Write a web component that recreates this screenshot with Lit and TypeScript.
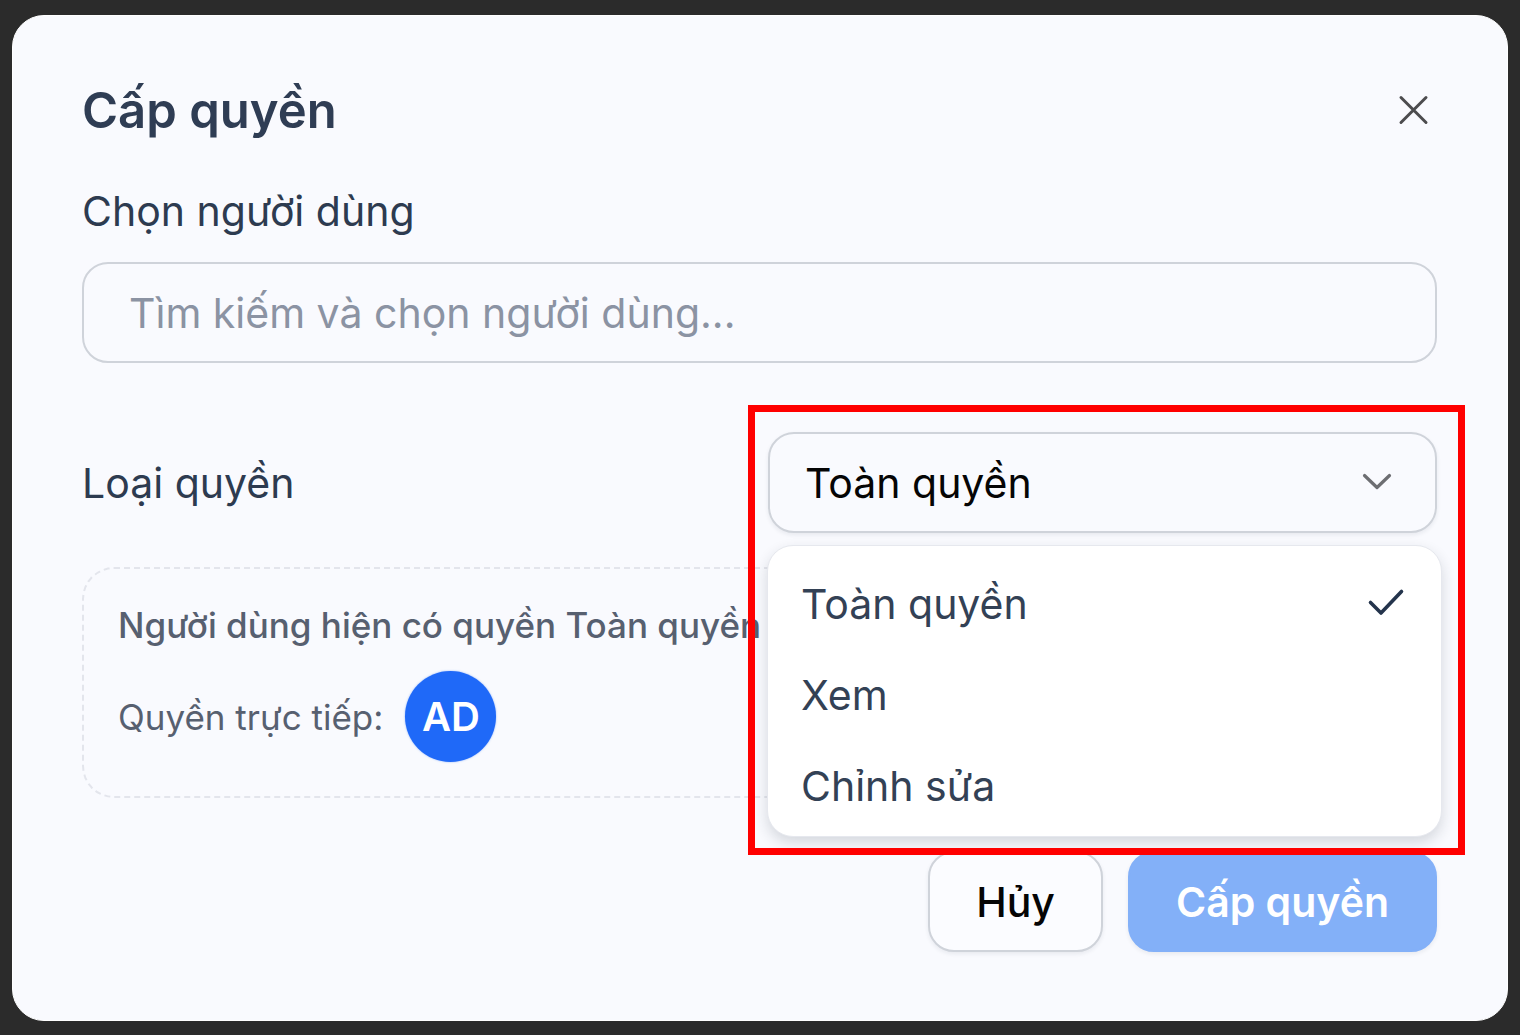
import { LitElement, html, css, svg } from "lit";
import { customElement, state } from "lit/decorators.js";

const OPTIONS = ["Toàn quyền", "Xem", "Chỉnh sửa"];

const closeIcon = svg`<svg class="icon" width="32" height="32" viewBox="0 0 32 32" aria-hidden="true">
  <path d="M4 2.5 29 27.5M29 2.5 4 27.5" stroke="#4c4c4e" stroke-width="3" />
</svg>`;

const chevronIcon = svg`<svg class="chevron" width="32" height="20" viewBox="0 0 32 20" aria-hidden="true">
  <path d="M3.5 3.5 16 15.5 28.5 3.5" stroke="#6d6e72" stroke-width="3.2" />
</svg>`;

const checkIcon = svg`<svg class="icon" width="38" height="34" viewBox="0 0 38 34" aria-hidden="true">
  <path d="M3.5 15.5 14 26 34.5 4.5" stroke="#24344c" stroke-width="3.6" />
</svg>`;

@customElement("app-root")
export class AppRoot extends LitElement {
  @state() private selected = OPTIONS[0];

  static styles = css`
    :host {
      display: flex;
      flex-direction: column;
      box-sizing: border-box;
      min-height: 100vh;
      padding: 15px 12px 14px;
      background: #2b2b2b;
      font-family: Inter, "Noto Sans", sans-serif;
      font-optical-sizing: none;
      color: #2d3b50;
    }
    * {
      box-sizing: border-box;
    }
    button,
    input,
    select {
      font: inherit;
      color: inherit;
      margin: 0;
    }
    svg {
      fill: none;
      stroke-linecap: round;
      stroke-linejoin: round;
    }
    .icon {
      display: block;
      flex: none;
    }
    .dialog {
      flex: 1;
      display: flex;
      flex-direction: column;
      padding: 64px 70px 68px 69px;
      border: 1px solid #ffffff;
      border-radius: 32px;
      background: #f9fafe;
      font-size: 41px;
      line-height: 50px;
    }
    .header {
      display: flex;
      align-items: center;
      justify-content: space-between;
      margin-bottom: 45px;
    }
    .title {
      margin: 0;
      font-size: 49px;
      line-height: 61px;
      font-weight: 600;
      color: #2f3d54;
    }
    .close {
      padding: 8px;
      border: 0;
      background: none;
    }
    .field {
      display: flex;
      flex-direction: column;
      gap: 26px;
      margin-bottom: 69px;
    }
    .control {
      width: 100%;
      height: 101px;
      border: 2px solid #cfd3da;
      border-radius: 26px;
      background: transparent;
    }
    .search {
      padding: 0 45px;
    }
    .search::placeholder {
      color: #8b93a3;
      opacity: 1;
    }
    .row {
      display: grid;
      grid-template-columns: 1fr 1fr;
      align-items: center;
      gap: 17px;
      margin-bottom: 34px;
    }
    .picker {
      position: relative;
      z-index: 1;
    }
    .select {
      display: block;
      appearance: none;
      padding: 0 35px;
      color: #050505;
      box-shadow: 0 2px 4px rgba(30, 41, 59, 0.08);
    }
    .chevron {
      position: absolute;
      top: 40px;
      right: 44px;
      pointer-events: none;
    }
    .menu {
      position: absolute;
      top: 113px;
      left: -1px;
      right: -5px;
      margin: 0;
      padding: 12px 0 5px;
      border: 1px solid #e6e8ee;
      border-radius: 26px;
      background: #ffffff;
      box-shadow: 0 6px 14px rgba(30, 41, 59, 0.16);
    }
    .option {
      display: flex;
      align-items: center;
      justify-content: space-between;
      width: 100%;
      height: 91px;
      padding: 0 36px 0 33px;
      border: 0;
      background: none;
      text-align: left;
      color: #334155;
    }
    .highlight {
      position: absolute;
      top: -27px;
      right: -28px;
      bottom: -322px;
      left: -20px;
      border: 7px solid #ff0000;
      pointer-events: none;
    }
    .info {
      display: flex;
      flex-direction: column;
      gap: 24px;
      margin-bottom: 53px;
      padding: 34px;
      border: 2px dashed #e3e5ec;
      border-radius: 32px;
      font-size: 35px;
      line-height: 44px;
      color: #576070;
    }
    .text {
      margin: 0;
      font-weight: 500;
    }
    .direct {
      display: flex;
      align-items: center;
      gap: 22px;
    }
    .avatar {
      display: grid;
      place-items: center;
      width: 91px;
      height: 91px;
      border-radius: 50%;
      background: #1f69f8;
      box-shadow: 0 0 2px rgba(31, 105, 248, 0.5);
      font-size: 40px;
      font-weight: 600;
      color: #ffffff;
    }
    .footer {
      display: flex;
      justify-content: flex-end;
      gap: 25px;
    }
    .button {
      height: 101px;
      padding: 0 46px;
      border: 2px solid #cfd3da;
      border-radius: 26px;
      background: #fbfcff;
      font-weight: 500;
      color: #050505;
      box-shadow: 0 2px 4px rgba(30, 41, 59, 0.08);
    }
    .primary {
      border-color: #83b0f8;
      background: #83b0f8;
      font-weight: 600;
      color: #ffffff;
    }
  `;

  private choose(value: string) {
    this.selected = value;
  }

  render() {
    return html`
      <section class="dialog" role="dialog" aria-labelledby="title">
        <header class="header">
          <h1 class="title" id="title">Cấp quyền</h1>
          <button class="close" type="button" aria-label="Đóng">${closeIcon}</button>
        </header>

        <div class="field">
          <label for="user">Chọn người dùng</label>
          <input class="control search" id="user" type="text" placeholder="Tìm kiếm và chọn người dùng..." />
        </div>

        <div class="row">
          <label for="kind">Loại quyền</label>
          <div class="picker">
            <select
              class="control select"
              id="kind"
              @change=${(e: Event) => this.choose((e.target as HTMLSelectElement).value)}
            >
              ${OPTIONS.map((o) => html`<option .selected=${o === this.selected}>${o}</option>`)}
            </select>
            ${chevronIcon}
            <div class="menu" role="listbox" aria-label="Loại quyền">
              ${OPTIONS.map(
                (o) => html`<button
                  class="option"
                  type="button"
                  role="option"
                  aria-selected=${o === this.selected}
                  @click=${() => this.choose(o)}
                >
                  <span>${o}</span>${o === this.selected ? checkIcon : ""}
                </button>`
              )}
            </div>
            <div class="highlight"></div>
          </div>
        </div>

        <div class="info">
          <p class="text">Người dùng hiện có quyền Toàn quyền</p>
          <div class="direct">
            <span>Quyền trực tiếp:</span>
            <span class="avatar">AD</span>
          </div>
        </div>

        <footer class="footer">
          <button class="button" type="button">Hủy</button>
          <button class="button primary" type="button">Cấp quyền</button>
        </footer>
      </section>
    `;
  }
}
